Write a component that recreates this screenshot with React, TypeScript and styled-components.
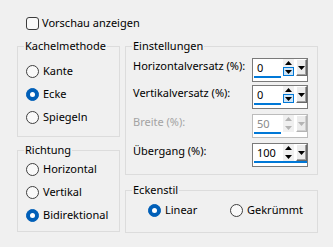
import React from "react";
import styled, { createGlobalStyle, css } from "styled-components";

const GlobalStyle = createGlobalStyle`
  html, body {
    margin: 0;
    padding: 0;
    background: #f0f0f0;
  }
  body {
    font-family: "Noto Sans", "Open Sans", sans-serif;
    font-size: 11px;
    color: #000;
  }
`;

const Page = styled.div`
  width: 333px;
  height: 247px;
  box-sizing: border-box;
  padding: 15px 0 0 17px;
  overflow: hidden;
`;

const CheckRow = styled.label`
  display: flex;
  align-items: center;
  gap: 3px;
  height: 16px;
  line-height: 16px;
  margin-left: 9px;
`;

const CheckBox = styled.span`
  width: 13px;
  height: 13px;
  box-sizing: border-box;
  border: 1px solid #3c3c3c;
  border-radius: 3px;
  background: #f9f9f9;
  flex: none;
`;

const Columns = styled.div`
  display: grid;
  grid-template-columns: 103px 193px;
  column-gap: 5px;
  margin-top: 7px;
`;

const Column = styled.div`
  display: flex;
  flex-direction: column;
`;

const Group = styled.fieldset<{ $top?: number }>`
  margin: ${(p) => p.$top ?? 0}px 0 0 0;
  padding: 0;
  min-width: 0;
  border: 1px solid #dcdcdc;
`;

const Legend = styled.legend`
  padding: 0 1px;
  margin-left: 6px;
  line-height: 16px;
`;

const GroupBody = styled.div<{ $pad: string }>`
  padding: ${(p) => p.$pad};
`;

const RadioList = styled.div`
  display: flex;
  flex-direction: column;
  gap: 7px;
`;

const RadioGrid = styled.div`
  display: grid;
  grid-template-columns: 82px auto;
`;

const RadioRow = styled.label`
  display: flex;
  align-items: center;
  gap: 4px;
  height: 16px;
  line-height: 16px;
  white-space: nowrap;
`;

const RadioCircle = styled.span<{ $checked?: boolean }>`
  width: 13px;
  height: 13px;
  box-sizing: border-box;
  border-radius: 50%;
  border: 1px solid #3f3f3f;
  background: #f9f9f9;
  display: flex;
  align-items: center;
  justify-content: center;
  flex: none;
  ${(p) =>
    p.$checked &&
    css`
      border-color: #005fb8;
      background: #005fb8;
    `}
`;

const RadioDot = styled.span`
  width: 5px;
  height: 5px;
  border-radius: 50%;
  background: #fff;
`;

const FieldRow = styled.div<{ $top?: number }>`
  display: flex;
  justify-content: space-between;
  align-items: flex-start;
  margin-top: ${(p) => p.$top ?? 0}px;
`;

const FieldLabel = styled.span<{ $disabled?: boolean }>`
  line-height: 16px;
  white-space: nowrap;
  color: ${(p) => (p.$disabled ? "#a3a3a3" : "#000")};
`;

const Spin = styled.div<{ $disabled?: boolean }>`
  width: 56px;
  height: 24px;
  box-sizing: border-box;
  border: 1px solid ${(p) => (p.$disabled ? "#bcbcbc" : "#7a7a7a")};
  background: #fff;
  display: flex;
  flex-direction: column;
  flex: none;
`;

const SpinTop = styled.div`
  display: flex;
  height: 17px;
`;

const SpinValue = styled.div<{ $disabled?: boolean }>`
  width: 30px;
  box-sizing: border-box;
  padding-left: 4px;
  line-height: 17px;
  color: ${(p) => (p.$disabled ? "#8a8a8a" : "#000")};
`;

const Arrows = styled.div`
  width: 11px;
  display: flex;
  flex-direction: column;
`;

const ArrowBtn = styled.div<{ $hot?: boolean; $h: number }>`
  height: ${(p) => p.$h}px;
  box-sizing: border-box;
  display: flex;
  align-items: center;
  justify-content: center;
  background: #f0f0f0;
  ${(p) =>
    p.$hot &&
    css`
      border: 1px solid #0078d7;
      background: #cce4f7;
    `}
`;

const DropBtn = styled.div<{ $disabled?: boolean }>`
  width: 11px;
  height: 17px;
  margin-left: 2px;
  box-sizing: border-box;
  border: 1px solid;
  border-color: #fff #696969 #696969 #fff;
  box-shadow: inset -1px -1px ${(p) => (p.$disabled ? "#d0d0d0" : "#a0a0a0")};
  background: #ececec;
  display: flex;
  align-items: center;
  justify-content: center;
  ${(p) =>
    p.$disabled &&
    css`
      border-color: #fff #b4b4b4 #b4b4b4 #fff;
    `}
`;

const Underline = styled.div<{ $w: number }>`
  width: ${(p) => p.$w}px;
  height: 2px;
  margin-left: 1px;
  background: #0078d7;
`;

const Tri = ({ up, color }: { up?: boolean; color: string }) => (
  <svg width="7" height="4" viewBox="0 0 7 4">
    <polygon points={up ? "3.5,0 7,4 0,4" : "0,0 7,0 3.5,4"} fill={color} />
  </svg>
);

const SpinBox = ({
  value,
  disabled,
  hot,
  focused,
}: {
  value: string;
  disabled?: boolean;
  hot?: boolean;
  focused?: boolean;
}) => {
  const ink = disabled ? "#b4b4b4" : "#000";
  return (
    <Spin $disabled={disabled}>
      <SpinTop>
        <SpinValue $disabled={disabled}>{value}</SpinValue>
        <Arrows>
          <ArrowBtn $h={8}>
            <Tri up color={ink} />
          </ArrowBtn>
          <ArrowBtn $h={9} $hot={hot}>
            <Tri color={ink} />
          </ArrowBtn>
        </Arrows>
        <DropBtn $disabled={disabled}>
          <Tri color={ink} />
        </DropBtn>
      </SpinTop>
      <Underline $w={focused ? 53 : 27} />
    </Spin>
  );
};

const Radio = ({ label, checked }: { label: string; checked?: boolean }) => (
  <RadioRow>
    <RadioCircle $checked={checked}>{checked && <RadioDot />}</RadioCircle>
    {label}
  </RadioRow>
);

const fields = [
  { label: "Horizontalversatz (%):", value: "0", top: 0, hot: true },
  { label: "Vertikalversatz (%):", value: "0", top: 3, hot: true },
  { label: "Breite (%):", value: "50", top: 5, disabled: true },
  { label: "Übergang (%):", value: "100", top: 5, focused: true },
];

const App: React.FC = () => {
  return (
    <Page>
      <GlobalStyle />
      <CheckRow>
        <CheckBox />
        Vorschau anzeigen
      </CheckRow>
      <Columns>
        <Column>
          <Group>
            <Legend>Kachelmethode</Legend>
            <GroupBody $pad="9px 0 11px 8px">
              <RadioList>
                <Radio label="Kante" />
                <Radio label="Ecke" checked />
                <Radio label="Spiegeln" />
              </RadioList>
            </GroupBody>
          </Group>
          <Group $top={5}>
            <Legend>Richtung</Legend>
            <GroupBody $pad="3px 0 8px 8px">
              <RadioList>
                <Radio label="Horizontal" />
                <Radio label="Vertikal" />
                <Radio label="Bidirektional" checked />
              </RadioList>
            </GroupBody>
          </Group>
        </Column>
        <Column>
          <Group>
            <Legend>Einstellungen</Legend>
            <GroupBody $pad="4px 9px 7px 7px">
              {fields.map((f) => (
                <FieldRow key={f.label} $top={f.top}>
                  <FieldLabel $disabled={f.disabled}>{f.label}</FieldLabel>
                  <SpinBox
                    value={f.value}
                    disabled={f.disabled}
                    hot={f.hot}
                    focused={f.focused}
                  />
                </FieldRow>
              ))}
            </GroupBody>
          </Group>
          <Group $top={7}>
            <Legend>Eckenstil</Legend>
            <GroupBody $pad="4px 0 14px 22px">
              <RadioGrid>
                <Radio label="Linear" checked />
                <Radio label="Gekrümmt" />
              </RadioGrid>
            </GroupBody>
          </Group>
        </Column>
      </Columns>
    </Page>
  );
};

export default App;
